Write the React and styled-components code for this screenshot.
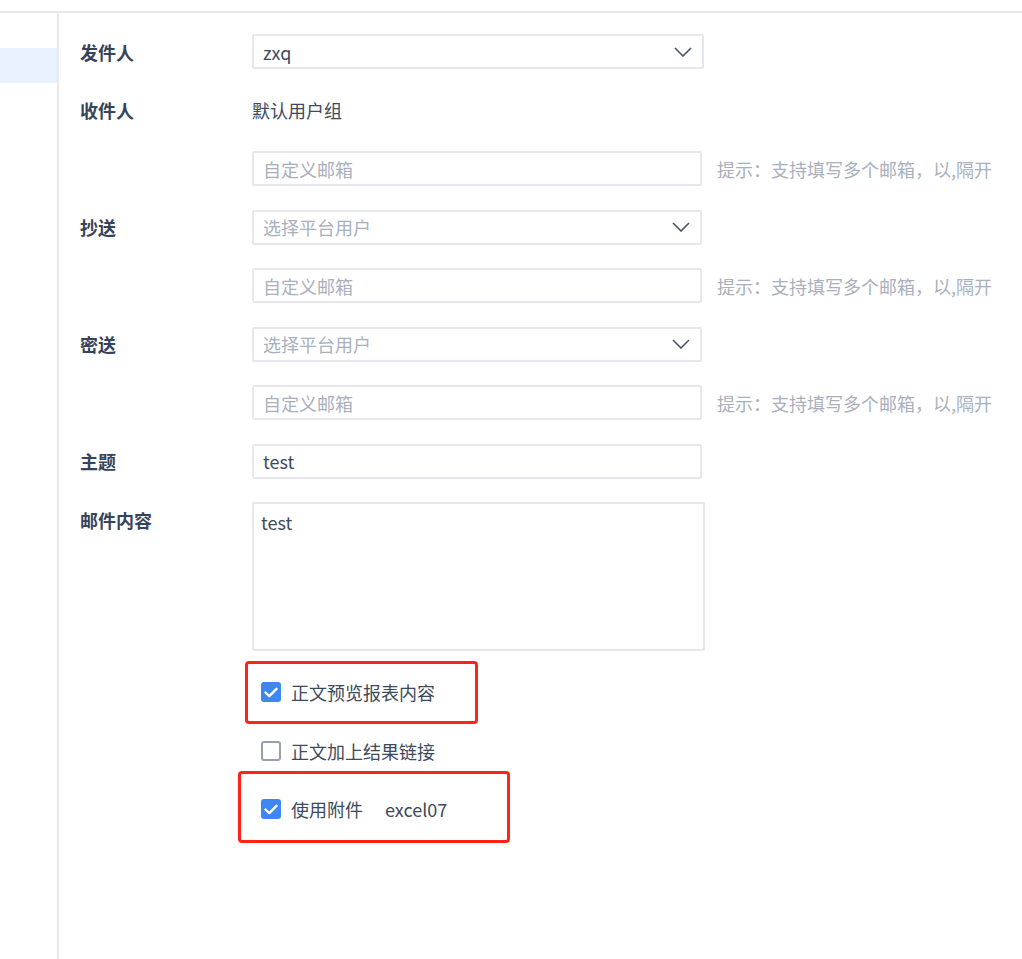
import React from 'react';
import styled, { createGlobalStyle } from 'styled-components';

const GlobalStyle = createGlobalStyle`
  html, body {
    margin: 0;
    padding: 0;
    background: #fff;
  }
  body {
    font-family: "Noto Sans CJK SC", "Noto Sans", sans-serif;
    color: #3d4a5c;
  }
`;

const Page = styled.div`
  width: 1022px;
  height: 959px;
  overflow: hidden;
  display: flex;
  flex-direction: column;
`;

const TopBar = styled.div`
  height: 11px;
  flex-shrink: 0;
  border-bottom: 2px solid #e8e9ee;
`;

const Body = styled.div`
  flex: 1;
  display: flex;
`;

const Sidebar = styled.aside`
  width: 57px;
  flex-shrink: 0;
  border-right: 2px solid #e8e9ee;
  padding-top: 35px;
`;

const SideItem = styled.div`
  height: 35px;
  background: ${p => (p.active ? '#e8f1fd' : 'transparent')};
`;

const Form = styled.div`
  flex: 1;
  padding: 21px 0 0 21px;
`;

const Row = styled.div`
  display: flex;
  align-items: ${p => (p.top ? 'flex-start' : 'center')};
  min-height: 35px;
  margin-bottom: 23.5px;
`;

const Label = styled.div`
  width: 172px;
  flex-shrink: 0;
  font-size: 18px;
  font-weight: 700;
  color: #36435a;
  line-height: ${p => (p.top ? '36px' : '1')};
`;

const Field = styled.div`
  position: relative;
  display: flex;
  align-items: center;
`;

const Box = styled.div`
  box-sizing: border-box;
  width: ${p => p.w || 450}px;
  height: ${p => p.h || 35}px;
  border: 2px solid #e6e7ee;
  border-radius: 2px;
  padding: 0 10px 0 9px;
  display: flex;
  align-items: center;
  justify-content: space-between;
  font-size: 18px;
  color: ${p => (p.placeholder ? '#a9b0bd' : '#3d4a5c')};
`;

const TextArea = styled(Box)`
  align-items: flex-start;
  padding: 5px 7px;
`;

const Plain = styled.div`
  font-size: 18px;
  color: #3d4a5c;
`;

const Hint = styled.div`
  margin-left: 15px;
  font-size: 18px;
  color: #a9b0bd;
  white-space: nowrap;
`;

const CheckRow = styled.div`
  position: relative;
  display: flex;
  align-items: center;
  height: 35px;
  margin: 0 0 23.5px 181px;
  gap: 10px;
  font-size: 18px;
  color: #3d4a5c;
`;

const Check = styled.span`
  box-sizing: border-box;
  width: 20px;
  height: 20px;
  border-radius: 3px;
  display: inline-flex;
  align-items: center;
  justify-content: center;
  background: ${p => (p.checked ? '#3f86f5' : '#fff')};
  border: ${p => (p.checked ? 'none' : '2px solid #9aa0ab')};
`;

const Extra = styled.span`
  margin-left: 12px;
`;

const Highlight = styled.div`
  position: absolute;
  left: ${p => p.l}px;
  top: ${p => p.t}px;
  width: ${p => p.w}px;
  height: ${p => p.h}px;
  box-sizing: border-box;
  border: 3px solid #ff2318;
  border-radius: 4px;
  pointer-events: none;
`;

const Chevron = () => (
  <svg width="18" height="10" viewBox="0 0 18 10" fill="none">
    <path d="M1 1l8 8 8-8" stroke="#4a5568" strokeWidth="1.6" />
  </svg>
);

const Tick = () => (
  <svg width="14" height="11" viewBox="0 0 14 11" fill="none">
    <path d="M1.5 5.5l3.8 3.6L12.5 1.8" stroke="#fff" strokeWidth="2.4" strokeLinecap="round" strokeLinejoin="round" />
  </svg>
);

const Select = ({ value, placeholder, w }) => (
  <Box w={w} placeholder={!value ? 1 : 0}>
    <span>{value || placeholder}</span>
    <Chevron />
  </Box>
);

const Mailbox = () => (
  <Row>
    <Label />
    <Field>
      <Box placeholder={1}>自定义邮箱</Box>
      <Hint>提示：支持填写多个邮箱，以,隔开</Hint>
    </Field>
  </Row>
);

export default function App() {
  return (
    <Page>
      <GlobalStyle />
      <TopBar />
      <Body>
        <Sidebar>
          <SideItem active />
        </Sidebar>
        <Form>
          <Row>
            <Label>发件人</Label>
            <Select value="zxq" w={452} />
          </Row>
          <Row>
            <Label>收件人</Label>
            <Plain>默认用户组</Plain>
          </Row>
          <Mailbox />
          <Row>
            <Label>抄送</Label>
            <Select placeholder="选择平台用户" />
          </Row>
          <Mailbox />
          <Row>
            <Label>密送</Label>
            <Select placeholder="选择平台用户" />
          </Row>
          <Mailbox />
          <Row>
            <Label>主题</Label>
            <Box>test</Box>
          </Row>
          <Row top>
            <Label top>邮件内容</Label>
            <TextArea w={453} h={149}>test</TextArea>
          </Row>
          <CheckRow>
            <Check checked><Tick /></Check>
            正文预览报表内容
            <Highlight l={-16} t={-13.5} w={233} h={63} />
          </CheckRow>
          <CheckRow>
            <Check />
            正文加上结果链接
          </CheckRow>
          <CheckRow>
            <Check checked><Tick /></Check>
            使用附件<Extra>excel07</Extra>
            <Highlight l={-23} t={-20.5} w={272} h={72} />
          </CheckRow>
        </Form>
      </Body>
    </Page>
  );
}
